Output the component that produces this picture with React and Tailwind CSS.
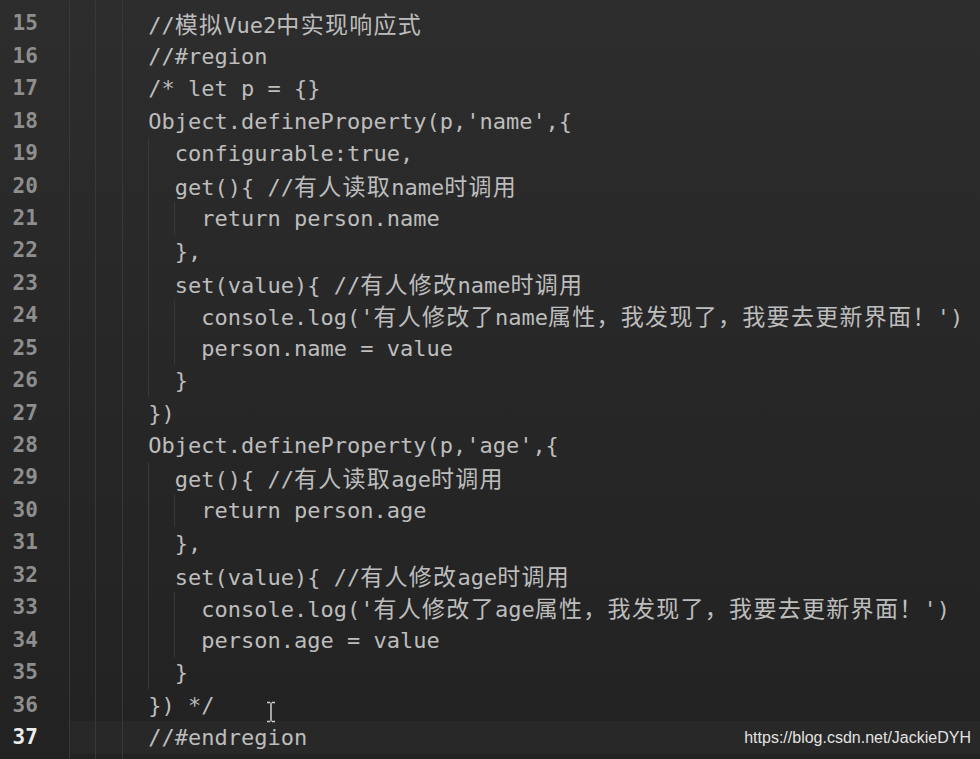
import React from "react";

const CJK = /([\u3000-\u303f\u3400-\u9fff\uff00-\uffef]+)/;

function Seg({ text }) {
  const parts = text.split(CJK);
  return parts.map((p, i) =>
    i % 2 === 1 ? (
      <span
        key={i}
        className="text-[23px] tracking-[1.3px] [font-family:'Noto_Sans_CJK_SC',sans-serif]"
      >
        {p}
      </span>
    ) : (
      <span key={i}>{p}</span>
    )
  );
}

const GUIDE = {
  0: "left-[0px]",
  2: "left-[26.4px]",
  4: "left-[52.8px]",
  6: "left-[79.2px]",
  8: "left-[105.6px]",
};

const B = [0, 2, 4];
const C6 = [0, 2, 4, 6];
const C8 = [0, 2, 4, 6, 8];

const lines = [
  [14, "", B, ""],
  [15, "      //模拟Vue2中实现响应式", B],
  [16, "      //#region", B],
  [17, "      /* let p = {}", B],
  [18, "      Object.defineProperty(p,'name',{", B],
  [19, "        configurable:true,", C6],
  [20, "        get(){ //有人读取name时调用", C6],
  [21, "          return person.name", C8],
  [22, "        },", C6],
  [23, "        set(value){ //有人修改name时调用", C6],
  [24, "          console.log('有人修改了name属性，我发现了，我要去更新界面！')", C8],
  [25, "          person.name = value", C8],
  [26, "        }", C6],
  [27, "      })", B],
  [28, "      Object.defineProperty(p,'age',{", B],
  [29, "        get(){ //有人读取age时调用", C6],
  [30, "          return person.age", C8],
  [31, "        },", C6],
  [32, "        set(value){ //有人修改age时调用", C6],
  [33, "          console.log('有人修改了age属性，我发现了，我要去更新界面！')", C8],
  [34, "          person.age = value", C8],
  [35, "        }", C6],
  [36, "      }) */", B],
  [37, "      //#endregion", B],
  [38, "", B, ""],
];

export default function App() {
  return (
    <div className="relative w-[980px] h-[759px] overflow-hidden bg-gradient-to-b from-[#2d2d2d] via-[#272727] to-[#222222] [font-family:'DejaVu_Sans_Mono',monospace]">
      <div className="-mt-[24.6px] flex flex-col">
        {lines.map(([n, code, guides, label]) => {
          const active = n === 37;
          return (
            <div key={n} className="flex h-[32.45px] items-stretch">
              <div
                className={
                  active
                    ? "w-[68.8px] shrink-0 flex items-center justify-end pr-[31px] text-[21px] font-bold text-[#ececec]"
                    : "w-[68.8px] shrink-0 flex items-center justify-end pr-[31px] text-[21px] font-bold text-[#8e8e8e]"
                }
              >
                {label === undefined ? n : label}
              </div>
              <div
                className={
                  active
                    ? "relative flex-1 flex items-center whitespace-pre text-[22px] text-[#bdbdbd] bg-[#282828]"
                    : "relative flex-1 flex items-center whitespace-pre text-[22px] text-[#bdbdbd]"
                }
              >
                {guides.map((g) => (
                  <span
                    key={g}
                    className={"absolute top-0 bottom-0 w-px bg-[#383838] " + GUIDE[g]}
                  />
                ))}
                <span className="relative">
                  <Seg text={code} />
                </span>
              </div>
            </div>
          );
        })}
      </div>

      {/* text cursor */}
      <svg
        className="absolute left-[265px] top-[701px]"
        width="12"
        height="22"
        viewBox="0 0 12 22"
      >
        <path
          d="M2 1.5h3M7 1.5h3M6 1.5v19M2 20.5h3M7 20.5h3"
          stroke="#cfcfcf"
          strokeWidth="1.5"
          fill="none"
        />
      </svg>

      {/* watermark */}
      <div className="absolute right-[9px] top-[727px] text-[16px] leading-[22px] text-[#e2e2e2] [font-family:'Liberation_Sans',Arial,sans-serif]">
        https://blog.csdn.net/JackieDYH
      </div>
    </div>
  );
}
